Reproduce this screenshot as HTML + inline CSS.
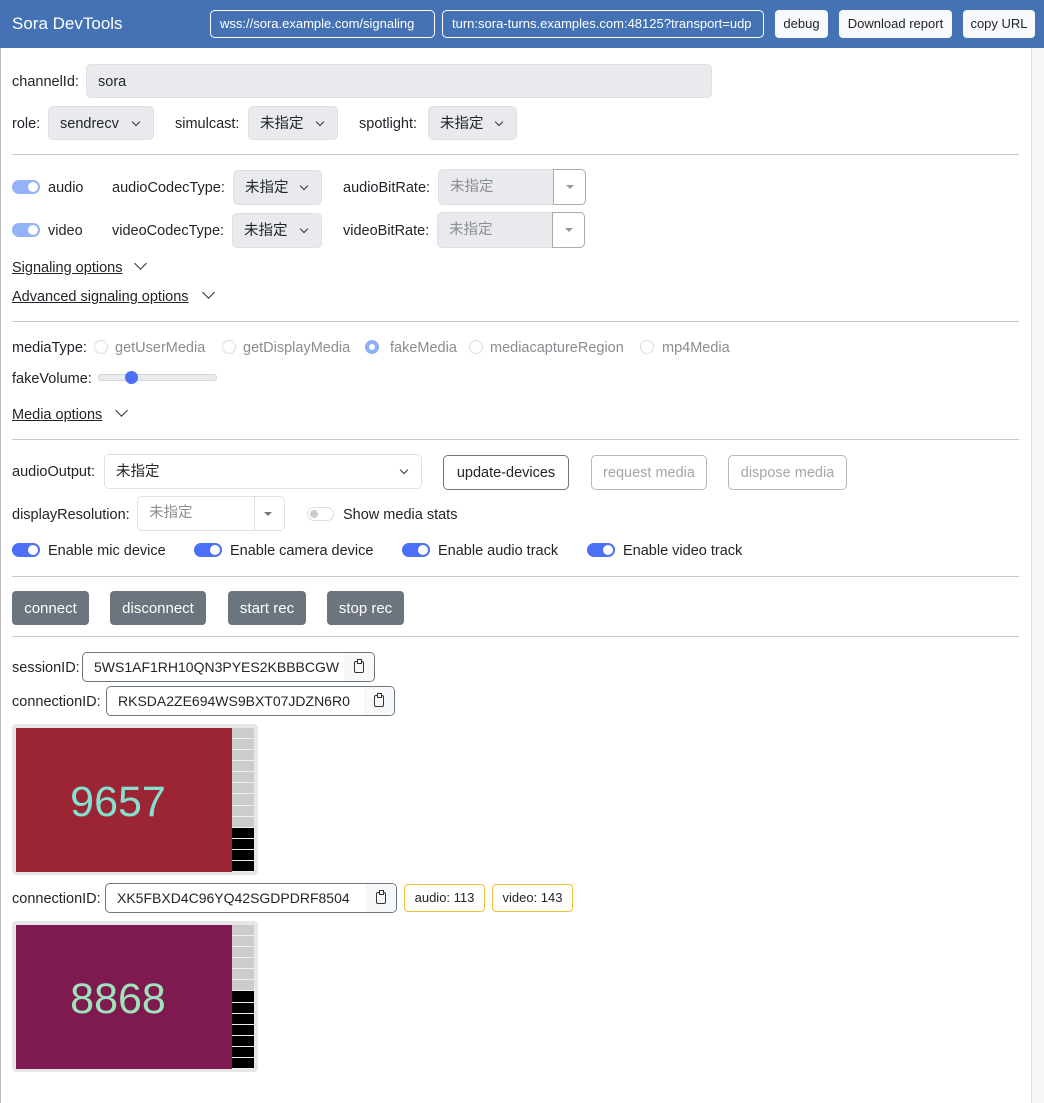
<!DOCTYPE html>
<html><head><meta charset="utf-8">
<style>
*{box-sizing:border-box;margin:0;padding:0}
body{width:1044px;height:1103px;background:#fff;font-family:"Liberation Sans","Noto Sans CJK JP",sans-serif;font-size:14.5px;color:#212529;position:relative;overflow:hidden}
.a{position:absolute;white-space:nowrap}
.hdr{position:absolute;left:0;top:0;width:1044px;height:48px;background:#4472b4}
.hin{position:absolute;top:10px;height:28px;border:1px solid #fff;border-radius:5px;color:#fff;font-size:13px;line-height:26px;padding-left:9px;overflow:hidden;white-space:nowrap}
.hbtn{position:absolute;top:10px;height:28px;background:#f8f9fa;border-radius:4px;color:#212529;font-size:13px;line-height:28px;text-align:center}
.lbl{position:absolute;line-height:20px;white-space:nowrap;top:0}
.sel{position:absolute;background:#e9eaee;border:1px solid #dee0e4;border-radius:5px;line-height:32px;padding-left:11px;white-space:nowrap}
.sel::after{content:"";position:absolute;right:14px;top:12px;width:5px;height:5px;border-right:1.3px solid #333;border-bottom:1.3px solid #333;transform:rotate(45deg)}
.sel.n::after{display:none}
.hr{position:absolute;left:12px;width:1007px;height:1px;background:#c8c8c8}
.tg{position:absolute;width:28px;height:14px;border-radius:7px;background:#4d6ff5}
.tg::after{content:"";position:absolute;right:2px;top:2px;width:10px;height:10px;border-radius:50%;background:#fff}
.tg.l{background:#93b2f7}
.ul{text-decoration:underline;position:absolute;line-height:20px;white-space:nowrap}
.chev{position:absolute;width:9px;height:9px;border-right:1.2px solid #333;border-bottom:1.2px solid #333;transform:rotate(45deg)}
.rad{position:absolute;width:14px;height:14px;border:1px solid #ddd;border-radius:50%}
.gry{color:#8a8d91}
.ob{position:absolute;height:35px;border:1px solid #6c757d;border-radius:5px;line-height:34px;text-align:center;background:#fff}
.ob.d{border-color:#b5b9bd;color:#a3a7ab}
.db{position:absolute;top:591px;height:34px;background:#6c757d;color:#fff;border-radius:4px;line-height:35px;text-align:center;font-size:15px}
.idb{position:absolute;height:30px;border:1px solid #6c757d;border-radius:5px;line-height:29px;padding-left:11px;overflow:hidden;background:#fff;white-space:nowrap;font-size:14px}
.idb .cp{position:absolute;right:0;top:0;width:30px;height:28px;background:#f7f8f9}
.cp i{position:absolute;left:10px;top:8px;width:10px;height:12px;border:1.3px solid #333;border-radius:2px}
.cp i::after{content:"";position:absolute;left:2px;top:-3px;width:3px;height:3px;border:1.3px solid #333;background:#f7f8f9}
.bad{position:absolute;top:884px;height:28px;border:1px solid #f0c23c;border-radius:4px;font-size:13px;line-height:26px;text-align:center}
.vid{position:absolute;left:12px;width:246px;height:151px;background:#e6e6e6;border-radius:4px}
.vin{position:absolute;left:4px;top:4px;width:216px;height:144px}
.num{position:absolute;left:0;width:204px;text-align:center;top:51px;font-size:43px;line-height:46px}
.strip{position:absolute;left:220px;top:4px;width:22px;height:144px}
.strip div{height:11.08px;border-bottom:1px solid #eee}
.t1{margin-top:1px}
</style></head><body>
<div class="hdr"></div>
<div class="a" style="left:12px;top:13px;font-size:17px;color:#fff;line-height:22px">Sora DevTools</div>
<div class="hin" style="left:210px;width:225px">wss://sora.example.com/signaling</div>
<div class="hin" style="left:442px;width:322px">turn:sora-turns.examples.com:48125?transport=udp</div>
<div class="hbtn" style="left:775px;width:53px">debug</div>
<div class="hbtn" style="left:839px;width:113px">Download report</div>
<div class="hbtn" style="left:963px;width:72px">copy URL</div>
<div class="a" style="left:1031px;top:48px;width:1px;height:1055px;background:#ddd"></div>
<div class="a" style="left:1032px;top:48px;width:12px;height:1055px;background:#f8f8f8"></div>
<div class="a" style="left:0;top:48px;width:1px;height:1055px;background:#bbb"></div>

<div class="lbl" style="left:12px;top:72px">channelId:</div>
<div class="sel n" style="left:86px;top:64px;width:626px;height:34px;line-height:34px">sora</div>

<div class="lbl" style="left:12px;top:114px">role:</div>
<div class="sel" style="left:48px;top:106px;width:106px;height:34px;line-height:34px">sendrecv</div>
<div class="lbl" style="left:175px;top:114px">simulcast:</div>
<div class="sel" style="left:248px;top:106px;width:90px;height:34px;line-height:34px">未指定</div>
<div class="lbl" style="left:359px;top:114px">spotlight:</div>
<div class="sel" style="left:428px;top:106px;width:89px;height:34px;line-height:34px">未指定</div>
<div class="hr" style="top:154px"></div>

<div class="tg l" style="left:12px;top:180px"></div>
<div class="lbl" style="left:48px;top:178px">audio</div>
<div class="lbl" style="left:112px;top:178px">audioCodecType:</div>
<div class="sel" style="left:233px;top:170px;width:89px;height:35px;line-height:34px">未指定</div>
<div class="lbl" style="left:343px;top:178px">audioBitRate:</div>
<div class="sel n gry" style="left:438px;top:169px;width:148px;height:36px;line-height:35px">未指定</div>
<div class="a" style="left:553px;top:169px;width:33px;height:36px;background:#fff;border:1px solid #aaa;border-radius:0 5px 5px 0"><span style="position:absolute;left:12px;top:15px;border-left:4px solid transparent;border-right:4px solid transparent;border-top:4px solid #999"></span></div>

<div class="tg l" style="left:12px;top:223px"></div>
<div class="lbl" style="left:48px;top:221px">video</div>
<div class="lbl" style="left:112px;top:221px">videoCodecType:</div>
<div class="sel" style="left:232px;top:213px;width:90px;height:35px;line-height:34px">未指定</div>
<div class="lbl" style="left:343px;top:221px">videoBitRate:</div>
<div class="sel n gry" style="left:437px;top:212px;width:148px;height:36px;line-height:35px">未指定</div>
<div class="a" style="left:552px;top:212px;width:33px;height:36px;background:#fff;border:1px solid #aaa;border-radius:0 5px 5px 0"><span style="position:absolute;left:12px;top:15px;border-left:4px solid transparent;border-right:4px solid transparent;border-top:4px solid #999"></span></div>

<div class="ul" style="left:12px;top:258px">Signaling options</div>
<div class="chev" style="left:136px;top:259px"></div>
<div class="ul" style="left:12px;top:287px">Advanced signaling options</div>
<div class="chev" style="left:204px;top:288px"></div>
<div class="hr" style="top:321px"></div>

<div class="lbl" style="left:12px;top:338px">mediaType:</div>
<div class="rad" style="left:94px;top:340px"></div><div class="lbl gry" style="left:115px;top:338px">getUserMedia</div>
<div class="rad" style="left:222px;top:340px"></div><div class="lbl gry" style="left:243px;top:338px">getDisplayMedia</div>
<div class="rad" style="left:365px;top:340px;border:4px solid #8fb0f7"></div><div class="lbl gry" style="left:390px;top:338px">fakeMedia</div>
<div class="rad" style="left:469px;top:340px"></div><div class="lbl gry" style="left:490px;top:338px">mediacaptureRegion</div>
<div class="rad" style="left:640px;top:340px"></div><div class="lbl gry" style="left:662px;top:338px">mp4Media</div>

<div class="lbl" style="left:12px;top:369px">fakeVolume:</div>
<div class="a" style="left:98px;top:374px;width:119px;height:7px;background:#e9ecef;border:1px solid #d5d5d5;border-radius:4px"></div>
<div class="a" style="left:125px;top:371px;width:13px;height:13px;border-radius:50%;background:#4d6ff5"></div>

<div class="ul" style="left:12px;top:405px">Media options</div>
<div class="chev" style="left:117px;top:406px"></div>
<div class="hr" style="top:439px"></div>

<div class="lbl" style="left:12px;top:462px">audioOutput:</div>
<div class="sel" style="left:104px;top:454px;width:318px;height:35px;line-height:34px;background:#fff;border-color:#dee2e6">未指定</div>
<div class="ob" style="left:443px;top:455px;width:126px">update-devices</div>
<div class="ob d" style="left:591px;top:455px;width:116px">request media</div>
<div class="ob d" style="left:728px;top:455px;width:119px">dispose media</div>

<div class="lbl" style="left:12px;top:505px">displayResolution:</div>
<div class="a gry" style="left:137px;top:496px;width:148px;height:35px;border:1px solid #dee2e6;border-radius:5px;line-height:33px;padding-left:11px">未指定</div>
<div class="a" style="left:254px;top:497px;width:1px;height:33px;background:#dee2e6"></div>
<div class="a" style="left:264px;top:512px;border-left:4px solid transparent;border-right:4px solid transparent;border-top:4px solid #777"></div>
<div class="a" style="left:307px;top:507px;width:27px;height:14px;border:1px solid #ddd;border-radius:7px"><span style="position:absolute;left:2px;top:2px;width:8px;height:8px;border-radius:50%;background:#ccc"></span></div>
<div class="lbl" style="left:343px;top:505px">Show media stats</div>

<div class="tg" style="left:12px;top:543px"></div><div class="lbl" style="left:48px;top:541px">Enable mic device</div>
<div class="tg" style="left:194px;top:543px"></div><div class="lbl" style="left:230px;top:541px">Enable camera device</div>
<div class="tg" style="left:402px;top:543px"></div><div class="lbl" style="left:438px;top:541px">Enable audio track</div>
<div class="tg" style="left:587px;top:543px"></div><div class="lbl" style="left:623px;top:541px">Enable video track</div>
<div class="hr" style="top:576px"></div>

<div class="db" style="left:12px;width:77px">connect</div>
<div class="db" style="left:110px;width:96px">disconnect</div>
<div class="db" style="left:228px;width:78px">start rec</div>
<div class="db" style="left:327px;width:77px">stop rec</div>
<div class="hr" style="top:636px"></div>

<div class="lbl" style="left:12px;top:658px">sessionID:</div>
<div class="idb" style="left:82px;top:652px;width:293px">5WS1AF1RH10QN3PYES2KBBBCGW<span class="cp"><i></i></span></div>
<div class="lbl" style="left:12px;top:692px">connectionID:</div>
<div class="idb" style="left:106px;top:686px;width:289px">RKSDA2ZE694WS9BXT07JDZN6R0<span class="cp"><i></i></span></div>

<div class="vid" style="top:724px">
<div class="vin" style="background:#9c2535"><div class="num" style="color:#86e0cf">9657</div></div>
<div class="strip">
<div style="background:#ccc"></div><div style="background:#ccc"></div><div style="background:#ccc"></div><div style="background:#ccc"></div><div style="background:#ccc"></div><div style="background:#ccc"></div><div style="background:#ccc"></div><div style="background:#ccc"></div><div style="background:#ccc"></div><div style="background:#000"></div><div style="background:#000"></div><div style="background:#000"></div><div style="background:#000"></div>
</div></div>

<div class="lbl" style="left:12px;top:889px">connectionID:</div>
<div class="idb" style="left:105px;top:883px;width:292px">XK5FBXD4C96YQ42SGDPDRF8504<span class="cp"><i></i></span></div>
<div class="bad" style="left:404px;width:81px">audio: 113</div>
<div class="bad" style="left:492px;width:81px">video: 143</div>

<div class="vid" style="top:921px">
<div class="vin" style="background:#7f1a50"><div class="num" style="color:#9fe3bd">8868</div></div>
<div class="strip">
<div style="background:#ccc"></div><div style="background:#ccc"></div><div style="background:#ccc"></div><div style="background:#ccc"></div><div style="background:#ccc"></div><div style="background:#ccc"></div><div style="background:#000"></div><div style="background:#000"></div><div style="background:#000"></div><div style="background:#000"></div><div style="background:#000"></div><div style="background:#000"></div><div style="background:#000"></div>
</div></div>
</body></html>
